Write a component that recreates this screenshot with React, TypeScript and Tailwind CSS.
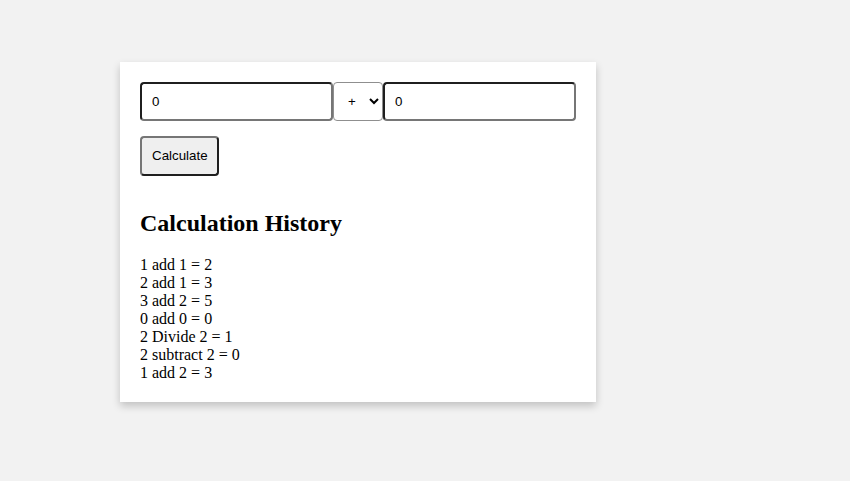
import React from "react";

const history = [
  "1 add 1 = 2",
  "2 add 1 = 3",
  "3 add 2 = 5",
  "0 add 0 = 0",
  "2 Divide 2 = 1",
  "2 subtract 2 = 0",
  "1 add 2 = 3",
];

export default function App() {
  return (
    <div className="min-h-[481px] w-full bg-[#f2f2f2] pt-[62px] pl-[120px]">
      <div className="w-[476px] bg-white p-[20px] shadow-[0_4px_8px_rgba(0,0,0,0.2)] font-['Liberation_Serif',serif] text-black">
        <div className="flex">
          <input
            type="text"
            defaultValue="0"
            className="w-[193px] h-[39px] px-[10px] text-[13.333px] font-['Liberation_Sans',Arial,sans-serif] bg-white rounded-[4px] border-2 border-t-[#1f1f1f] border-l-[#1f1f1f] border-b-[#767676] border-r-[#767676] outline-none"
          />
          <select
            defaultValue="+"
            className="w-[50px] h-[39px] pl-[10px] text-[13.333px] font-['Liberation_Sans',Arial,sans-serif] bg-white rounded-[4px] border border-[#8f8f8f] text-black"
          >
            <option value="+">+</option>
            <option value="-">-</option>
            <option value="*">*</option>
            <option value="/">/</option>
          </select>
          <input
            type="text"
            defaultValue="0"
            className="w-[193px] h-[39px] px-[10px] text-[13.333px] font-['Liberation_Sans',Arial,sans-serif] bg-white rounded-[4px] border-2 border-t-[#1f1f1f] border-l-[#1f1f1f] border-b-[#767676] border-r-[#767676] outline-none"
          />
        </div>
        <button className="mt-[15px] h-[40px] w-[79px] px-[10px] text-[13.333px] font-['Liberation_Sans',Arial,sans-serif] bg-[#efefef] rounded-[4px] border-2 border-t-[#767676] border-l-[#767676] border-b-[#1f1f1f] border-r-[#1f1f1f] text-black">
          Calculate
        </button>
        <h2 className="mt-[34px] mb-[18px] text-[24px] font-bold leading-[27.6px]">
          Calculation History
        </h2>
        <div className="text-[16px] leading-[18px]">
          {history.map((h, i) => (
            <div key={i}>{h}</div>
          ))}
        </div>
      </div>
    </div>
  );
}
